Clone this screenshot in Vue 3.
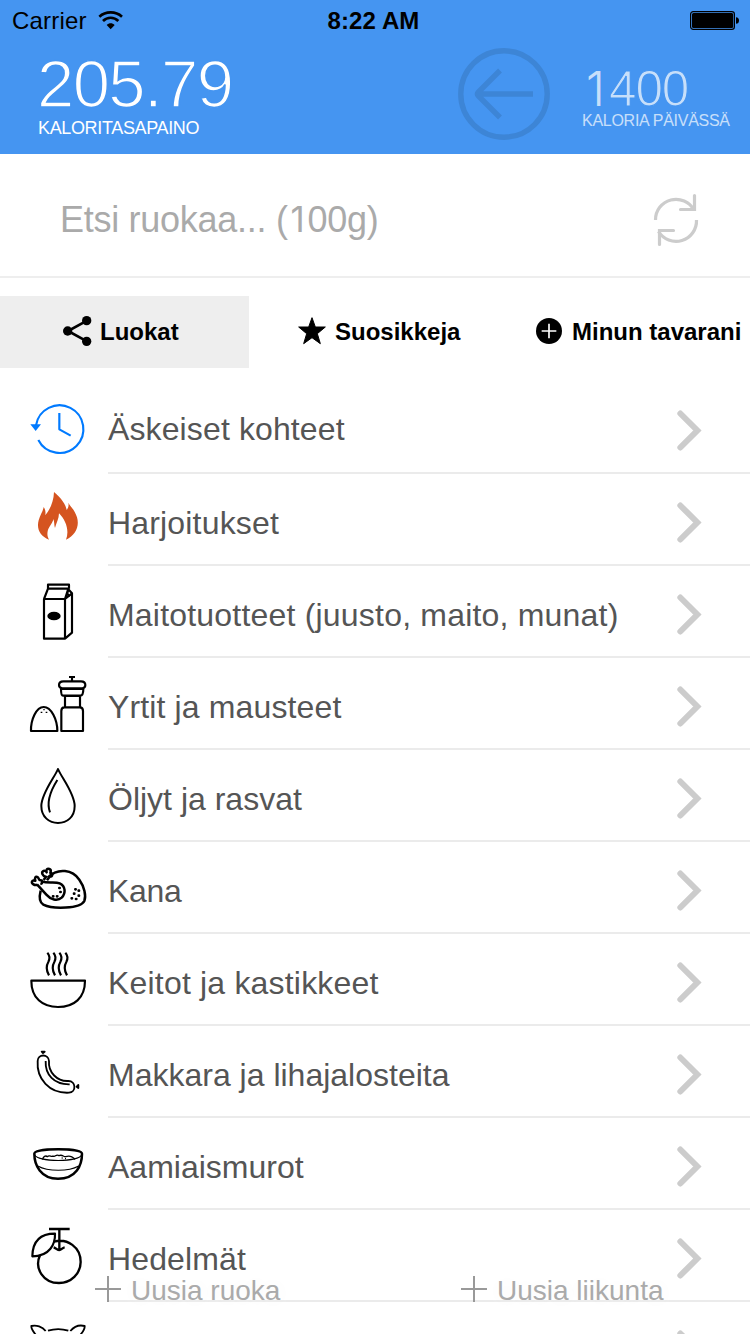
<script setup>
const rows = [
  { label: 'Äskeiset kohteet', icon: 'recent', top: -24, tracking: 0.12 },
  { label: 'Harjoitukset', icon: 'fire', top: 252, tracking: 0.17 },
  { label: 'Maitotuotteet (juusto, maito, munat)', icon: 'milk', top: -12, tracking: 0.2 },
  { label: 'Yrtit ja mausteet', icon: 'spice', top: 264, tracking: 0.13 },
  { label: 'Öljyt ja rasvat', icon: 'drop', top: -15, tracking: 0 },
  { label: 'Kana', icon: 'chicken', top: 261, tracking: -0.3 },
  { label: 'Keitot ja kastikkeet', icon: 'soup', top: -18, tracking: 0.19 },
  { label: 'Makkara ja lihajalosteita', icon: 'sausage', top: 258, tracking: 0 },
  { label: 'Aamiaismurot', icon: 'cereal', top: -36, tracking: 0 },
  { label: 'Hedelmät', icon: 'fruit', top: 240, tracking: 0.12 },
  { label: '', icon: 'pig', top: 516, tracking: 0 },
]
</script>

<template>
  <div class="screen">
    <header class="header">
      <div class="status">
        <div class="carrier">
          <span>Carrier</span>
          <svg class="wifi" width="26" height="20" viewBox="0 0 78 60" fill="none" stroke="#000">
            <path d="M4 17C23 0 53 0 72 17" stroke-width="8" />
            <path d="M15 30C28 17 48 17 61 30" stroke-width="8" />
            <path d="M26 42C33 35 43 35 50 42L38 55Z" fill="#000" stroke="none" />
          </svg>
        </div>
        <span class="clock">8:22 AM</span>
        <svg class="battery" width="50" height="20" viewBox="0 0 50 20">
          <rect x=".6" y=".6" width="43.8" height="17.8" rx="2.6" fill="none" stroke="#000" stroke-width="1.2" />
          <rect x="2" y="2" width="41.2" height="15" rx="1.5" />
          <path d="M46 6.2c2 0 3 1.3 3 3.3s-1 3.300-3 3.300z" />
        </svg>
      </div>
      <div class="totals">
        <div class="balance">
          <div class="big">205.79</div>
          <div class="cap">KALORITASAPAINO</div>
        </div>
        <svg class="back" width="92" height="92" viewBox="0 0 92 92" fill="none" stroke="#3d85d6" stroke-width="5.400">
          <circle cx="46" cy="46" r="43.200" />
          <path d="M75 46H20M42 22.500L20.500 44Q18.500 46 20.500 48L42 69.500" />
        </svg>
        <div class="goal">
          <div class="mid"><span class="one">1</span>400</div>
          <div class="cap2">KALORIA PÄIVÄSSÄ</div>
        </div>
      </div>
    </header>

    <div class="search">
      <span class="hint">Etsi ruokaa... (<span class="one">1</span>00g)</span>
      <svg width="46" height="54" viewBox="0 0 46 54" fill="none" stroke="#ccc" stroke-width="3.200" stroke-linecap="round">
        <path d="M2.500 27A20.500 20.500 0 0 1 41 17M43.500 27A20.500 20.500 0 0 1 5.500 38.500" stroke-linecap="butt" />
        <path d="M41.500 2.500V16.500H27.500M6.500 51.500V37.500H20.500" />
      </svg>
    </div>

    <nav class="tabs">
      <div class="tab active">
        <svg width="30" height="30" viewBox="0 0 90 90">
          <path d="M72 14L15 45L72 76" fill="none" stroke="#000" stroke-width="8" />
          <circle cx="71" cy="14" r="14" /><circle cx="14" cy="45" r="14" /><circle cx="71" cy="76" r="14" />
        </svg>
        <span>Luokat</span>
      </div>
      <div class="tab second">
        <svg width="28" height="28" viewBox="0 0 84 84">
          <path d="M42 2L52 30L82 30L58 50L67 80L42 62L17 80L26 50L2 30L32 30Z" stroke="#000" stroke-width="3" stroke-linejoin="round" />
        </svg>
        <span>Suosikkeja</span>
      </div>
      <div class="tab third">
        <svg width="26" height="26" viewBox="0 0 78 78">
          <circle cx="39" cy="39" r="39" /><path d="M17 39H61M39 17V61" stroke="#fff" stroke-width="5" />
        </svg>
        <span>Minun tavarani</span>
      </div>
    </nav>

    <main class="list">
      <div v-for="row in rows" :key="row.icon" class="row">
        <svg class="icon" :class="row.icon" width="80" height="92" :viewBox="`0 ${row.top} 240 276`">
          <g v-if="row.icon === 'recent'" stroke="#007aff" stroke-width="6.500">
            <path d="M48 106A71.500 71.500 0 1 1 55 150M118 69V118L152 137" />
            <path d="M31 103H63L47 123Z" fill="#007aff" stroke="none" />
          </g>
          <path v-else-if="row.icon === 'fire'" fill="#d55420" stroke="none" d="M102 306C123 323 138 345 140 360C145 354 147 347 145 338C151 350 164 359 171 382C179 409 167 435 138 449C149 421 137 390 117 370C117 386 108 401 105 414C102 406 104 397 100 387C98 401 85 411 83 424C81 435 83 442 87 449C60 438 49 417 56 391C60 375 69 364 71 351C77 360 77 367 76 376C91 357 101 334 102 306Z" />
          <g v-else-if="row.icon === 'milk'" stroke-width="6.500">
            <path d="M72 87H135V206H72ZM72 87L84 56H145L135 87M84 56V44H147V56M145 58L156 70V188L135 206M135 87L156 70M146 60C139 70 143 76 150 78" />
            <ellipse cx="102" cy="138" rx="20" ry="13" fill="#000" stroke="none" />
          </g>
          <g v-else-if="row.icon === 'spice'" stroke-width="6.500">
            <path d="M33 483C32 449 49 411 71 411C94 411 112 449 112 483ZM124 483V423Q124 412 133 412H180Q189 412 189 423V483ZM135 411V378H180V411M129 377Q123 377 123 357H190Q190 377 181 377ZM127 355Q117 354 117 345Q117 334 130 334H183Q196 334 196 345Q196 354 187 355ZM156 333V323M147 321H165" />
            <path d="M62 427h5M77 427h5M70 419h4" stroke-width="4" />
          </g>
          <g v-else-if="row.icon === 'drop'" stroke-width="6">
            <path d="M114 42C104 67 64 115 64 153C64 186 88 204 114 204C141 204 164 186 164 153C164 115 124 67 114 42Z" />
            <path d="M112 75C93 105 78 140 90 172" />
          </g>
          <g v-else-if="row.icon === 'chicken'" stroke-width="7.500">
            <path d="M83 368C115 336 158 345 178 374C193 395 199 422 193 438C181 462 98 463 70 449C58 442 58 423 62 407" />
            <path d="M51 388L79 419C92 434 112 440 125 428C138 415 137 393 119 385C105 379 86 386 64 379" />
            <path d="M52 389C44 393 34 386 36 380C37 375 42 376 46 377C43 369 47 363 52 366C58 368 55 377 62 376C68 376 69 386 61 387M71 375L78 365C67 364 64 352 69 349C73 345 78 349 80 352C77 344 82 340 88 342C96 345 91 352 91 354C99 355 99 365 89 365L81 376" />
            <path d="M118 399h1M121 411h1M99 424h1M111 424h1M166 403h1M176 407h1M162 416h1M176 422h1M155 430h1M168 432h1" stroke-width="8" stroke-linecap="round" />
          </g>
          <g v-else-if="row.icon === 'soup'" stroke-width="6.500">
            <path d="M34 122H195C195 174 162 201 114 201C67 201 34 174 34 122Z" />
            <path d="M82 38C91 48 90 56 85 66C79 76 76 87 87 106M100 38C109 48 108 56 103 66C97 76 94 87 105 106M118 38C127 48 126 56 121 66C115 76 112 87 123 106M136 38C145 48 144 56 139 66C133 76 130 87 141 106" />
          </g>
          <g v-else-if="row.icon === 'sausage'" stroke-width="5.500">
            <path d="M53 363C53 341 86 341 87 363C84 397 112 425 145 423C169 423 169 457 147 458C88 461 49 416 53 363ZM77 363C75 404 102 434 149 433" />
            <path d="M65 335L69 339L74 335ZM175 435L170 440L175 444Z" fill="#000" />
          </g>
          <g v-else-if="row.icon === 'cereal'" stroke-width="7.500">
            <path d="M43 71C43 53 186 53 186 71C186 105 169 146 114 146C62 146 43 105 43 71Z" />
            <path d="M44 75C58 97 172 97 185 75M53 108C84 125 146 125 176 108" stroke-width="3.500" />
            <path d="M68 89C69 80 77 75 82 80C89 73 94 83 99 78C106 84 107 70 117 77C128 72 130 82 137 80C151 75 163 83 164 89M125 84h3M135 86h3" stroke-width="4" />
          </g>
          <g v-else-if="row.icon === 'fruit'" stroke-width="7">
            <path d="M60 376C42 415 70 459 117 459C153 459 182 431 182 396C182 351 142 324 102 335M87 297H149M118 297V359M101 352C107 354 113 360 118 360C124 360 128 353 134 352" />
            <path d="M37 379C38 327 69 311 105 311C106 341 90 379 37 379Z" stroke-width="6.500" />
          </g>
          <path v-else stroke-width="5.500" d="M50 618C46 611 33 601 34 588C49 584 67 590 77 603M84 602C103 596 126 596 145 602M151 603C162 590 179 584 194 588C195 601 183 611 178 618" />
        </svg>
        <div class="body">
          <span class="label" :style="{ letterSpacing: row.tracking + 'px' }">{{ row.label }}</span>
          <svg class="chevron" width="26" height="42" viewBox="0 0 78 126">
            <path d="M13 10.500L64 61.500L13 112.500" fill="none" stroke="#ccc" stroke-width="18" stroke-linecap="round" />
          </svg>
        </div>
      </div>
    </main>

    <footer class="actions">
      <div class="action food">
        <svg width="26" height="26" viewBox="0 0 26 26"><path d="M0 13H26M13 0V26" stroke="#999" stroke-width="2" /></svg>
        <span>Uusia ruoka</span>
      </div>
      <div class="action sport">
        <svg width="26" height="26" viewBox="0 0 26 26"><path d="M0 13H26M13 0V26" stroke="#999" stroke-width="2" /></svg>
        <span>Uusia liikunta</span>
      </div>
    </footer>
  </div>
</template>

<style scoped>
.screen {
  position: relative;
  width: 750px;
  height: 1334px;
  overflow: hidden;
  background: #fff;
  font-family: "Liberation Sans", Arial, sans-serif;
  white-space: nowrap;
}
svg { display: block; flex: none; }
.header { height: 154px; background: #4595f1; }
.status {
  display: grid;
  grid-template-columns: 1fr auto 1fr;
  align-items: center;
  height: 41px;
  padding: 0 12px;
  font-size: 24px;
}
.carrier { display: flex; align-items: center; gap: 11px; letter-spacing: .2px; }
.clock { padding-top: 1px; margin-left: -3px; font-weight: 700; font-size: 24px; letter-spacing: .1px; }
.battery { justify-self: end; margin-right: -2px; }
.totals { display: flex; height: 113px; color: #fff; }
.balance { width: 420px; padding: 8px 0 0 38px; }
.big {
  height: 69px;
  margin-left: -1px;
  font-size: 67px;
  line-height: 70px;
  letter-spacing: -1.6px;
  -webkit-text-stroke: 1.6px #4595f1;
}
.cap { font-size: 18px; line-height: 20px; letter-spacing: -.35px; }
.back { margin-top: 7px; }
.goal { margin-left: 32px; padding-top: 16px; opacity: .7; }
.mid {
  height: 55px;
  font-size: 49.5px;
  line-height: 63px;
  letter-spacing: -1.1px;
  -webkit-text-stroke: 1.2px #4595f1;
}
.one { display: inline-block; font-family: Inter, sans-serif; line-height: 1; text-align: center; }
.mid .one { width: 27px; font-size: 48px; font-weight: 300; letter-spacing: 0; -webkit-text-stroke: 0; }
.hint .one { width: 20px; font-size: 35px; font-weight: 400; letter-spacing: 0; }
.cap2 { font-size: 16px; line-height: 18px; letter-spacing: -.27px; }
.search {
  display: flex;
  justify-content: space-between;
  align-items: center;
  height: 122px;
  padding: 0 51px 0 60px;
  border-bottom: 2px solid #eee;
  color: #aaa;
  font-size: 36px;
}
.hint { padding-top: 9px; letter-spacing: -.28px; }
.search svg { margin-top: 9px; }
.tabs {
  display: grid;
  grid-template-columns: 249px 250px 1fr;
  height: 72px;
  margin-top: 18px;
  font-size: 24px;
  font-weight: 700;
}
.tab { display: flex; align-items: center; gap: 8px; }
.tab svg { margin-top: -2px; }
.active { padding-left: 63px; gap: 7px; background: #eee; }
.second { padding-left: 49px; gap: 9px; }
.third { padding-left: 37px; gap: 10px; }
.list { padding-top: 14px; }
.row { display: flex; height: 92px; padding-left: 20px; }
.icon { fill: none; stroke: #000; stroke-linejoin: round; }
.body {
  display: flex;
  flex: 1;
  justify-content: space-between;
  margin-left: 8px;
  padding-right: 48px;
  height: 92px;
  box-sizing: border-box;
  border-bottom: 2px solid #ebebeb;
  color: #555;
  font-size: 32px;
}
.label { padding-top: 4px; line-height: 90px; }
.row:first-child .label { padding-top: 2px; }
.chevron { margin-top: 28px; }
.actions {
  position: absolute;
  left: 95px;
  top: 1276px;
  display: flex;
  height: 30px;
  width: 600px;
  color: #aaa;
  font-size: 28px;
}
.action { display: flex; align-items: flex-start; gap: 10px; text-shadow: 0 0 16px #f3f3f3; }
.food { width: 366px; }
.action span { line-height: 29px; }
</style>
